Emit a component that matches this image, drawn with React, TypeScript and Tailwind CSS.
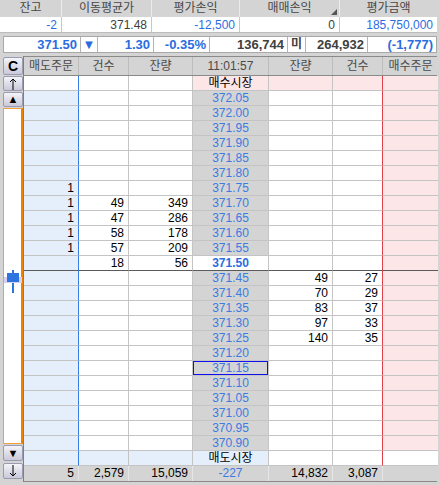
import React from "react";

type Kind = "top" | "ask" | "cur" | "bid" | "bottom";
type Row = { so?: string; sc?: string; sq?: string; p: string; bq?: string; bc?: string; kind: Kind; box?: boolean };

const sellData: Record<string, [string, string, string]> = {
  "371.75": ["1", "", ""],
  "371.70": ["1", "49", "349"],
  "371.65": ["1", "47", "286"],
  "371.60": ["1", "58", "178"],
  "371.55": ["1", "57", "209"],
};
const buyData: Record<string, [string, string]> = {
  "371.45": ["49", "27"],
  "371.40": ["70", "29"],
  "371.35": ["83", "37"],
  "371.30": ["97", "33"],
  "371.25": ["140", "35"],
};

const askPrices = ["372.05", "372.00", "371.95", "371.90", "371.85", "371.80", "371.75", "371.70", "371.65", "371.60", "371.55"];
const bidPrices = ["371.45", "371.40", "371.35", "371.30", "371.25", "371.20", "371.15", "371.10", "371.05", "371.00", "370.95", "370.90"];

const rows: Row[] = [
  { p: "매수시장", kind: "top" },
  ...askPrices.map((p) => {
    const d = sellData[p];
    return { p, kind: "ask" as Kind, so: d?.[0], sc: d?.[1], sq: d?.[2] };
  }),
  { p: "371.50", kind: "cur", sc: "18", sq: "56" },
  ...bidPrices.map((p) => {
    const d = buyData[p];
    return { p, kind: "bid" as Kind, bq: d?.[0], bc: d?.[1], box: p === "371.15" };
  }),
  { p: "매도시장", kind: "bottom" },
];

const FONT = "font-['Liberation_Sans','Noto_Sans_CJK_KR',sans-serif]";

function Btn({ children }: { children: React.ReactNode }) {
  return (
    <div className="flex h-full w-full items-center justify-center rounded-[2px] border border-[#9a9ab0] bg-gradient-to-b from-[#f4f4fa] to-[#c9c9da] text-[12px] font-bold leading-none text-black">
      {children}
    </div>
  );
}

function ArrowSvg({ down }: { down?: boolean }) {
  return (
    <svg width="8" height="12" viewBox="0 0 8 12">
      {down ? (
        <path d="M4 0 V11 M1 8 L4 11 L7 8" stroke="#000" strokeWidth="1" fill="none" />
      ) : (
        <path d="M4 12 V1 M1 4 L4 1 L7 4" stroke="#000" strokeWidth="1" fill="none" />
      )}
    </svg>
  );
}

function BookRow({ r }: { r: Row }) {
  const bb = r.kind === "cur" ? "border-b border-b-[#5a5a5a]" : "border-b border-b-[#c4c4c4]";
  const base = `h-[15px] ${bb} text-right pr-[4px] text-[12px] leading-[14px] text-black overflow-hidden whitespace-nowrap`;
  const c0 = r.kind === "top" ? "bg-white" : "bg-[#e4effb]";
  const c12 = r.kind === "bottom" ? "bg-[#e4effb]" : "bg-white";
  const c45 = r.kind === "top" ? "bg-[#fde6e8]" : "bg-white";
  const c6 = r.kind === "bottom" ? "bg-white" : "bg-[#fde6e8]";
  let pc = "bg-[#d4d4d4] text-[#3b7be2]";
  if (r.kind === "top") pc = "bg-[#fde6e8] text-black";
  if (r.kind === "bottom") pc = "bg-[#e4effb] text-black";
  if (r.kind === "cur") pc = "bg-white text-[#2b6de0] font-bold";
  const box = r.box ? "shadow-[inset_0_0_0_1px_#1010f0]" : "";
  return (
    <div className="grid grid-cols-[55px_50px_64px_76px_64px_50px_55px]">
      <div className={`${base} ${c0} border-r border-r-[#3a7ee8]`}>{r.so}</div>
      <div className={`${base} ${c12} border-r border-r-[#c4c4c4]`}>{r.sc}</div>
      <div className={`${base} ${c12} border-r border-r-[#c4c4c4]`}>{r.sq}</div>
      <div className={`h-[15px] ${bb} border-r border-r-[#c4c4c4] text-center text-[12px] leading-[14px] ${pc} ${box}`}>{r.p}</div>
      <div className={`${base} ${c45} border-r border-r-[#c4c4c4]`}>{r.bq}</div>
      <div className={`${base} ${c45} border-r border-r-[#e0404a]`}>{r.bc}</div>
      <div className={`${base} ${c6}`}></div>
    </div>
  );
}

export default function App() {
  const hdr = "border-r border-r-[#ececec] text-center text-[12px] leading-[17px] text-[#474747]";
  const val = "border-r border-r-[#c8c8c8] text-right pr-[4px] text-[12px] leading-[16px]";
  const pb = "border-r border-r-[#b4b4b4] text-right pr-[3px] text-[13px] font-bold leading-[15px]";
  const gh = "border-r border-r-[#bcbcbc] text-center text-[12px] leading-[18px] text-[#4a4a4a]";
  const tot = "border-r border-r-[#e6e6e6] text-right pr-[4px] text-[12px] leading-[15px] text-black";
  return (
    <div className={`${FONT} h-[485px] w-[439px] overflow-hidden bg-[#d4d4d4]`}>
      {/* summary */}
      <div className="flex h-[17px] w-[437px]">
        <div className={`w-[62px] ${hdr}`}>잔고</div>
        <div className={`w-[90px] ${hdr}`}>이동평균가</div>
        <div className={`w-[88px] ${hdr}`}>평가손익</div>
        <div className={`relative w-[100px] ${hdr}`}>
          매매손익
          <svg className="absolute bottom-[2px] right-[2px]" width="6" height="6" viewBox="0 0 6 6">
            <path d="M6 0 L6 6 L0 6 Z" fill="#555" />
          </svg>
        </div>
        <div className={`flex-1 ${hdr} border-r-0`}>평가금액</div>
      </div>
      <div className="flex h-[16px] w-[437px] border-b border-b-[#bcbcbc] bg-white">
        <div className={`w-[62px] ${val} text-[#2b6de0]`}>-2</div>
        <div className={`w-[90px] ${val} text-[#404040]`}>371.48</div>
        <div className={`w-[88px] ${val} text-[#2b6de0]`}>-12,500</div>
        <div className={`w-[100px] ${val} text-[#404040]`}>0</div>
        <div className={`flex-1 ${val} border-r-0 text-[#2b6de0]`}>185,750,000</div>
      </div>

      {/* price bar */}
      <div className="ml-[3px] mt-[3px] flex h-[17px] w-[434px] border border-[#a8a8a8] bg-white">
        <div className={`w-[77px] ${pb} text-[#2b6de0]`}>371.50</div>
        <div className="flex w-[17px] items-center justify-center border-r border-r-[#b4b4b4] text-[13px] leading-none text-[#2b6de0]">▼</div>
        <div className={`w-[56px] ${pb} text-[#2b6de0]`}>1.30</div>
        <div className={`w-[56px] ${pb} text-[#2b6de0]`}>-0.35%</div>
        <div className={`w-[78px] ${pb} text-[#404040]`}>136,744</div>
        <div className="w-[18px] border-r border-r-[#b4b4b4] text-center text-[12px] font-bold leading-[15px] text-[#404040]">미</div>
        <div className={`w-[62px] ${pb} text-[#404040]`}>264,932</div>
        <div className={`flex-1 ${pb} border-r-0 text-[#2b6de0]`}>(-1,777)</div>
      </div>

      {/* order book */}
      <div className="mt-[3px] flex">
        <div className="ml-[3px] flex w-[20px] flex-col">
          <div className="mt-[1px] h-[18px]"><Btn><span className="text-[14px]">C</span></Btn></div>
          <div className="mt-[1px] h-[15px]"><Btn><ArrowSvg /></Btn></div>
          <div className="mt-[1px] h-[15px]"><Btn><span className="text-[11px]">▲</span></Btn></div>
          <div className="relative mt-[1px] h-[336px] border-y border-l border-r-2 border-y-[#f0a040] border-l-[#f0a040] border-r-[#f08000] bg-white">
            <div className="absolute left-[8px] top-[161px] h-[23px] w-[2px] bg-[#2d74e0]" />
            <div className="absolute left-0 top-[168px] h-[6px] w-[18px] bg-[#d8d0f0]" />
            <div className="absolute left-[3px] top-[164px] h-[9px] w-[12px] bg-[#2d74e0]" />
          </div>
          <div className="mt-[1px] h-[16px]"><Btn><span className="text-[11px]">▼</span></Btn></div>
          <div className="mt-[2px] h-[16px]"><Btn><ArrowSvg down /></Btn></div>
        </div>
        <div className="w-[414px] border-l border-l-[#808080]">
          <div className="grid h-[20px] grid-cols-[55px_50px_64px_76px_64px_50px_55px] border-y border-y-[#8a8a8a]">
            <div className={gh}>매도주문</div>
            <div className={gh}>건수</div>
            <div className={gh}>잔량</div>
            <div className={gh}>11:01:57</div>
            <div className={gh}>잔량</div>
            <div className={gh}>건수</div>
            <div className={`${gh} border-r-0`}>매수주문</div>
          </div>
          {rows.map((r, i) => (
            <BookRow key={i} r={r} />
          ))}
          <div className="grid h-[16px] grid-cols-[55px_50px_64px_76px_64px_50px_55px] border-b border-b-[#8a8a8a]">
            <div className={tot}>5</div>
            <div className={tot}>2,579</div>
            <div className={tot}>15,059</div>
            <div className="border-r border-r-[#e6e6e6] text-center text-[12px] leading-[15px] text-[#3b7be2]">-227</div>
            <div className={tot}>14,832</div>
            <div className={tot}>3,087</div>
            <div className={`${tot} border-r-0`}></div>
          </div>
        </div>
      </div>
    </div>
  );
}
